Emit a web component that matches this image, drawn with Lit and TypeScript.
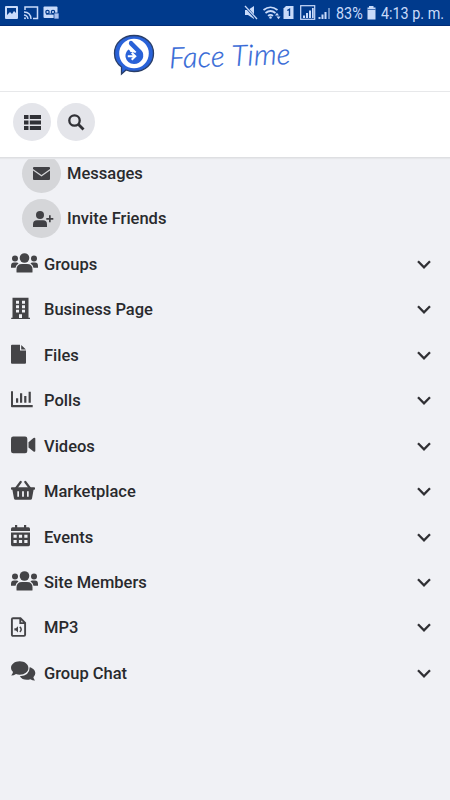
import { LitElement, html, svg, css } from "lit";
import { customElement } from "lit/decorators.js";

const people = svg`<circle cx="13.5" cy="6" r="4.8"/><circle cx="4" cy="6.5" r="3"/><circle cx="23" cy="6.5" r="3"/>
<path d="M5.5 20V17.5Q5.5 12 11 12H16Q21.5 12 21.5 17.5V20Q21.5 20.5 21 20.5H6Q5.500 20.500 5.500 20Z"/>
<path d="M0 15.800V14Q0 10.600 3 10.600H5.500Q7 10.600 7.500 11.500Q5 13 4.500 15.800ZM27 15.800V14Q27 10.600 24 10.600H21.500Q20 10.600 19.500 11.500Q22 13 22.500 15.800Z"/>`;

const icons: Record<string, unknown> = {
  people,
  building: svg`<path fill-rule="evenodd" d="M1.500-.2H17.500V19.800H19V21.100H.2V19.800H1.500ZM5 2.800V5.800H8V2.800ZM11 2.800V5.800H14V2.800ZM5 7.300V10.300H8V7.300ZM11 7.300V10.300H14V7.300ZM5 11.800V14.500H8V11.800ZM11 11.800V14.500H14V11.800ZM8 16.300V20.100H11V16.300Z"/>`,
  file: svg`<path d="M1 1.800H9V7.600H15V19.800Q15 20.800 14 20.800H1Q0 20.800 0 19.800V2.800Q0 1.800 1 1.800ZM10.200 1.900L14.900 6.500H10.200Z"/>`,
  chart: svg`<path d="M0 2.200H2V16H21.700V18.300H.8Q0 18.300 0 17.500ZM5 9.200H7.200V13.700H5ZM9 4.200H11.200V13.700H9ZM13.200 6.900H15.400V13.700H13.200ZM17.600 2.700H19.800V13.700H17.600Z"/>`,
  video: svg`<rect x="0" y="2.500" width="16.300" height="16.700" rx="2.200"/><path d="M17.500 8.300L22.500 4.100Q24.300 3.300 24.300 4.800V16.800Q24.300 18.300 22.500 17.500L17.500 13.500Z"/>`,
  basket: svg`<path d="M9.700 2L5.200 8M14.300 2L18.800 8" fill="none" stroke="currentColor" stroke-width="2.200" stroke-linecap="round"/>
<path fill-rule="evenodd" d="M.8 7.200H23.200Q24 7.200 24 8V9Q24 9.800 23.200 9.800H22.600L21 18.500Q20.700 19.800 19.500 19.800H4.500Q3.300 19.800 3 18.500L1.400 9.800H.8Q0 9.800 0 9V8Q0 7.200.8 7.200ZM6.300 11.300V16.800H8V11.300ZM11.100 11.300V16.800H12.900V11.300ZM16 11.300V16.800H17.700V11.300Z"/>`,
  calendar: svg`<path fill-rule="evenodd" d="M4 0H6.200V2.300H13V0H15.200V2.300H17.500Q19 2.300 19 4V6H0V4Q0 2.300 1.500 2.300H4ZM0 7.500H19V19.500Q19 21.200 17.500 21.200H1.500Q0 21.200 0 19.500ZM2.500 9.700V12.700H5.700V9.700ZM7.900 9.700V12.700H11.100V9.700ZM13.300 9.700V12.700H16.500V9.700ZM2.500 15V18H5.700V15ZM7.900 15V18H11.100V15ZM13.300 15V18H16.500V15Z"/>`,
  audio: svg`<path d="M2 2.300H9.500L14.100 6.800V18.800Q14.100 19.900 13 19.900H2Q.9 19.900.9 18.800V3.300Q.9 2.300 2 2.300ZM9.300 2.300V7.100H14" fill="none" stroke="currentColor" stroke-width="1.900"/>
<path d="M3.400 12.300H4.900L7 10.200V16.600L4.900 14.600H3.400Z"/><path d="M8.800 10.900Q11.600 13.400 8.800 15.900" fill="none" stroke="currentColor" stroke-width="1.500"/>`,
  chat: svg`<path d="M8.700.3C13.600.3 17.400 3.200 17.400 7S13.600 13.700 8.700 13.700Q6.600 13.700 5 13Q2.800 14.500.2 14.500Q1.700 12.900 2 11.100Q0 9.300 0 7C0 3.200 3.800.3 8.700.3Z"/>
<path d="M18.700 6.300C22 7.100 24.300 9.500 24.300 12.300Q24.300 14.500 22.400 16.300Q22.700 18 24.100 19.600Q21.400 19.600 19.300 18.200Q17.800 18.800 15.900 18.800Q11 18.800 8.800 15.200Q18.600 14.800 18.700 6.300Z"/>`,
};

const sections: [string, string][] = [
  ["people", "Groups"],
  ["building", "Business Page"],
  ["file", "Files"],
  ["chart", "Polls"],
  ["video", "Videos"],
  ["basket", "Marketplace"],
  ["calendar", "Events"],
  ["people", "Site Members"],
  ["audio", "MP3"],
  ["chat", "Group Chat"],
];

@customElement("app-root")
export class AppRoot extends LitElement {
  static styles = css`
    :host { display: flex; flex-direction: column; height: 800px; width: 450px; overflow: hidden;
      background: #f0f1f5; color: #292a2d; font-family: Roboto, "Liberation Sans", sans-serif; }
    svg { display: block; fill: currentColor; overflow: visible; flex: none; }
    .status { height: 26px; flex: none; background: #003a8c; color: #c9dbfa; display: flex;
      align-items: center; box-sizing: border-box; border-bottom: 1px solid #002c78; }
    .pct, .time { font-size: 16.500px; line-height: 26px; white-space: nowrap; transform-origin: 0 50%;
      transform: translateY(1px) scaleX(.87); }
    .pct { margin-left: 5px; width: 27px; }
    .brand { height: 66px; flex: none; box-sizing: border-box; background: #fff;
      border-bottom: 1px solid #e7e8ea; display: flex; padding: 8px 0 0 113px; }
    .wordmark { font: italic 300 29px/40px Lato, sans-serif; color: #3267d6; margin: 1px 0 0 14px;
      width: 123px; height: 40px; white-space: nowrap; letter-spacing: .3px; transform: rotate(-2deg);
      -webkit-text-stroke: .3px #3267d6; }
    .tools { height: 66px; flex: none; box-sizing: border-box; background: #fff;
      border-bottom: 1px solid #dedfe2; box-shadow: 0 1px 1px #e6e7ea; display: flex; gap: 6px; padding: 11px 13px;
      position: relative; z-index: 1; }
    .tool { width: 38px; height: 38px; border-radius: 50%; background: #e4e5ea;
      display: flex; align-items: center; justify-content: center; color: #303136; }
    .list { display: flex; flex-direction: column; margin-top: -7.500px; }
    .row { height: 45.450px; display: flex; align-items: center; font-size: 16.500px; font-weight: 500; }
    .sub { height: 45.600px; padding-left: 22px; gap: 6px; }
    .sub .disc { width: 39px; height: 39px; border-radius: 50%; background: #d5d6d9; color: #414145;
      display: flex; align-items: center; justify-content: center; }
    .section { padding: 0 19px 0 11px; }
    .icon { width: 33px; height: 24px; color: #444447; }
    .label { flex: 1; white-space: nowrap; }
  `;

  render() {
    return html`
      <div class="status">
        <svg width="246" height="26" viewBox="0 0 246 26">
          <path fill-rule="evenodd" d="M7 6H17Q18 6 18 7V18Q18 19 17 19H6Q5 19 5 18V7Q5 6 6 6ZM7 8V15L10 12L12 14L14 11L16 13V8Z"/>
          <path d="M25 10V7H37.500V18.500H33" fill="none" stroke="currentColor" stroke-width="1.500"/>
          <path d="M24 12Q30.500 12 31 19M24 15Q27.500 15.500 28 19" fill="none" stroke="currentColor" stroke-width="1.400"/><circle cx="25" cy="18.300" r="1"/>
          <rect x="43.500" y="6.500" width="14" height="11.500" rx="1"/>
          <path d="M46 14H55" stroke="#003a8c" stroke-width="1.200"/><circle cx="47.500" cy="12" r="1.700" fill="none" stroke="#003a8c" stroke-width="1.200"/><circle cx="53" cy="12" r="1.700" fill="none" stroke="#003a8c" stroke-width="1.200"/>
          <rect x="54" y="13" width="5" height="6" fill="#a9c1ee" stroke="#003a8c" stroke-width=".7"/>
        </svg>
        <svg width="85" height="26" viewBox="246 0 85 26">
          <path d="M245 10H248L254 6V19L248 15H245Z"/><path d="M245 6L256 18.500" stroke="#003a8c" stroke-width="2.500"/><path d="M245 6L257 19" stroke="currentColor" stroke-width="1.300"/>
          <g fill="none" stroke="currentColor" stroke-width="1.700"><path d="M263.500 10Q270.500 4.500 277.500 10M265.500 13Q270.500 9 275.500 13M268 15.800Q270.500 13.800 273 15.800"/></g><circle cx="270.500" cy="17.500" r="1.300"/>
          <path d="M275 15.500L277 12.800L279 15.500ZM276.500 16.500L278.500 19.200L280.500 16.500Z"/>
          <path d="M286 6H293.500V19H283.500V8.500Z"/><path d="M287.300 10.500L289.500 9.300V16" fill="none" stroke="#003a8c" stroke-width="1.400"/>
          <rect x="300.700" y="5.700" width="14" height="13.600" fill="none" stroke="currentColor" stroke-width="1.200"/>
          <path d="M303 15.500H305V18H303ZM306 13H308V18H306ZM309 10.500H311V18H309ZM312 8H313.700V18H312ZM318.500 17H320.500V19H318.500ZM321.500 14.500H323.500V19H321.500ZM324.500 12H326.500V19H324.500Z"/><path opacity=".5" d="M328 8H330V19H328Z"/>
        </svg>
        <span class="pct">83%</span>
        <svg width="18" height="26" viewBox="363 0 18 26"><path d="M369 6H373.500V7.500H375.500V19.500H367.500V7.500H369Z"/><path d="M367 9.500H376" stroke="#4673b8" stroke-width="1"/></svg>
        <span class="time">4:13 p. m.</span>
      </div>
      <div class="brand">
        <svg width="42" height="42" viewBox="0 0 42 42">
          <path d="M21 1.500C32 1.500 40.500 9 40.500 19.500S32 37.500 21 37.500Q16.500 37.500 13 36L8.500 40V33Q1.500 28 1.500 19.500C1.500 9 10 1.500 21 1.500Z" fill="#2962d8" stroke="#293e68" stroke-width="1.300"/>
          <ellipse cx="21" cy="19.500" rx="14.800" ry="14.800" fill="#fff"/>
          <path d="M15.800 9.500Q15.800 6 19 7L28.500 16.500Q31.500 20 29.500 25Q26.500 30 21 30Q14 29.500 12.500 23Q12 18.500 15.500 15.500Q17 16 17.500 18H23.500L16.500 11Z" fill="#2962d8"/>
          <path d="M14.800 22.300H21.500M18.700 18.800L22.300 22.300L18.700 25.800" fill="none" stroke="#fff" stroke-width="2"/>
          <path d="M17.300 13L23.500 19.200L19 18Z" fill="#fff"/>
        </svg>
        <div class="wordmark">Face Time</div>
      </div>
      <div class="tools">
        <div class="tool"><svg width="17" height="15" viewBox="0 0 17 15"><path d="M0 0H4.500V4H0ZM5.800 0H17V4H5.800ZM0 5.500H4.500V9.500H0ZM5.800 5.500H17V9.500H5.800ZM0 11H4.500V15H0ZM5.800 11H17V15H5.800Z"/></svg></div>
        <div class="tool"><svg width="17" height="17" viewBox="0 0 17 17"><circle cx="6.500" cy="6.500" r="5.200" fill="none" stroke="currentColor" stroke-width="2.300"/><path d="M10.500 10.500L15.500 15.500" stroke="currentColor" stroke-width="2.800"/></svg></div>
      </div>
      <div class="list">
        <div class="row sub"><div class="disc"><svg width="17" height="13" viewBox="0 0 17 13"><path d="M1 0H16Q17 0 17 1V2L8.500 8L0 2V1Q0 0 1 0ZM0 3.500L8.500 9.500L17 3.500V12Q17 13 16 13H1Q0 13 0 12Z"/></svg></div><span class="label">Messages</span></div>
        <div class="row sub"><div class="disc"><svg width="20" height="16" viewBox="-1 0 20 16"><circle cx="7" cy="4" r="4"/><path d="M0 16V13.500Q0 9.300 4 9.300H10Q14 9.300 14 13.500V16ZM16 4.300H17.700V7H20.300V8.700H17.700V11.300H16V8.700H13.300V7H16Z"/></svg></div><span class="label">Invite Friends</span></div>
        ${sections.map(([icon, name]) => html`
          <div class="row section">
            <svg class="icon" viewBox="0 0 33 24">${icons[icon]}</svg>
            <span class="label">${name}</span>
            <svg width="14" height="9" viewBox="0 0 14 9"><path d="M1 1.300L7 7.300L13 1.300" fill="none" stroke="#303034" stroke-width="2.300"/></svg>
          </div>`)}
      </div>
    `;
  }
}
